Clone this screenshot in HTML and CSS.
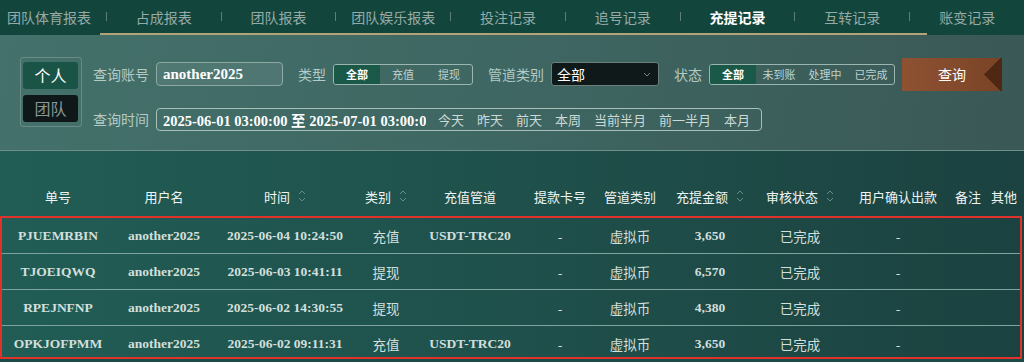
FILE: index.html
```html
<!DOCTYPE html>
<html>
  <head>
    <meta charset="utf-8">
    <title>充提记录</title>
    <link rel="stylesheet" href="styles.css">
  </head>
  <body>
    <div class="tabs">
      <div class="tab-list">
        <span class="tab">团队体育报表</span><span class="sep"></span>
        <span class="tab">占成报表</span><span class="sep"></span>
        <span class="tab">团队报表</span><span class="sep"></span>
        <span class="tab">团队娱乐报表</span><span class="sep"></span>
        <span class="tab">投注记录</span><span class="sep"></span>
        <span class="tab">追号记录</span><span class="sep"></span>
        <span class="tab active">充提记录</span><span class="sep"></span>
        <span class="tab">互转记录</span><span class="sep"></span>
        <span class="tab">账变记录</span>
      </div>
      <div class="tab-line"></div>
    </div>

    <div class="filters">
      <div class="toggle">
        <div class="toggle-btn on">个人</div>
        <div class="toggle-btn">团队</div>
      </div>
      <div class="fields">
        <div class="field-row">
          <span class="label">查询账号</span>
          <input class="input account" type="text" value="another2025" readonly>
          <span class="label gap-l">类型</span>
          <div class="seg">
            <span class="on">全部</span><span>充值</span><span>提现</span>
          </div>
          <span class="label gap-l">管道类别</span>
          <div class="select">
            <span>全部</span>
            <svg width="8" height="5" viewBox="0 0 8 5"><path d="M1 1 L4 4 L7 1" fill="none" stroke="#6f8582" stroke-width="1"/></svg>
          </div>
          <span class="label gap-l">状态</span>
          <div class="seg">
            <span class="on">全部</span><span>未到账</span><span>处理中</span><span>已完成</span>
          </div>
          <div class="btn-search">查询</div>
        </div>
        <div class="field-row row-time">
          <span class="label">查询时间</span>
          <div class="range">
            <input class="range-text" type="text" value="2025-06-01 03:00:00 至 2025-07-01 03:00:00" readonly>
            <span class="quick first">今天</span>
            <span class="quick">昨天</span>
            <span class="quick">前天</span>
            <span class="quick">本周</span>
            <span class="quick">当前半月</span>
            <span class="quick">前一半月</span>
            <span class="quick">本月</span>
          </div>
        </div>
      </div>
    </div>

    <div class="table">
      <div class="thead">
        <div class="th">单号</div>
        <div class="th">用户名</div>
        <div class="th">时间<svg class="sort" width="8" height="16" viewBox="0 0 8 16"><path d="M1 6 L4 3 L7 6 M1 10 L4 13 L7 10" fill="none" stroke="#6b8c86" stroke-width="1"/></svg></div>
        <div class="th">类别<svg class="sort" width="8" height="16" viewBox="0 0 8 16"><path d="M1 6 L4 3 L7 6 M1 10 L4 13 L7 10" fill="none" stroke="#6b8c86" stroke-width="1"/></svg></div>
        <div class="th">充值管道</div>
        <div class="th">提款卡号</div>
        <div class="th">管道类别</div>
        <div class="th">充提金额<svg class="sort" width="8" height="16" viewBox="0 0 8 16"><path d="M1 6 L4 3 L7 6 M1 10 L4 13 L7 10" fill="none" stroke="#6b8c86" stroke-width="1"/></svg></div>
        <div class="th">审核状态<svg class="sort" width="8" height="16" viewBox="0 0 8 16"><path d="M1 6 L4 3 L7 6 M1 10 L4 13 L7 10" fill="none" stroke="#6b8c86" stroke-width="1"/></svg></div>
        <div class="th">用户确认出款</div>
        <div class="th">备注</div>
        <div class="th">其他</div>
      </div>

      <div class="tbody">
        <div class="tr">
          <div class="td en">PJUEMRBIN</div>
          <div class="td en">another2025</div>
          <div class="td en">2025-06-04 10:24:50</div>
          <div class="td">充值</div>
          <div class="td en">USDT-TRC20</div>
          <div class="td">-</div>
          <div class="td">虚拟币</div>
          <div class="td en">3,650</div>
          <div class="td">已完成</div>
          <div class="td">-</div>
          <div class="td"></div>
          <div class="td"></div>
        </div>
        <div class="tr">
          <div class="td en">TJOEIQWQ</div>
          <div class="td en">another2025</div>
          <div class="td en">2025-06-03 10:41:11</div>
          <div class="td">提现</div>
          <div class="td en"></div>
          <div class="td">-</div>
          <div class="td">虚拟币</div>
          <div class="td en">6,570</div>
          <div class="td">已完成</div>
          <div class="td">-</div>
          <div class="td"></div>
          <div class="td"></div>
        </div>
        <div class="tr">
          <div class="td en">RPEJNFNP</div>
          <div class="td en">another2025</div>
          <div class="td en">2025-06-02 14:30:55</div>
          <div class="td">提现</div>
          <div class="td en"></div>
          <div class="td">-</div>
          <div class="td">虚拟币</div>
          <div class="td en">4,380</div>
          <div class="td">已完成</div>
          <div class="td">-</div>
          <div class="td"></div>
          <div class="td"></div>
        </div>
        <div class="tr">
          <div class="td en">OPKJOFPMM</div>
          <div class="td en">another2025</div>
          <div class="td en">2025-06-02 09:11:31</div>
          <div class="td">充值</div>
          <div class="td en">USDT-TRC20</div>
          <div class="td">-</div>
          <div class="td">虚拟币</div>
          <div class="td en">3,650</div>
          <div class="td">已完成</div>
          <div class="td">-</div>
          <div class="td"></div>
          <div class="td"></div>
        </div>
      </div>
    </div>
  </body>
</html>
```

FILE: styles.css
```css
* {
  margin: 0;
  box-sizing: border-box;
}

body {
  width: 1024px;
  height: 362px;
  overflow: hidden;
  background: #1d4a46;
  font-family: "Noto Sans CJK SC", sans-serif;
  color: #d5e0dd;
}

/* 顶部标签 */
.tabs {
  background: #12463d;
}

.tab-list {
  display: flex;
  align-items: center;
  height: 33px;
  margin-left: -8px;
}

.tab {
  width: 114px;
  text-align: center;
  font-size: 14px;
  color: #98aaa6;
}

.tab.active {
  color: #ffffff;
  font-weight: bold;
}

.sep {
  width: 1px;
  height: 9px;
  background: #5f7f79;
}

.tab-line {
  width: 827px;
  height: 2px;
  margin-left: 100px;
  background: #b3a478;
}

/* 筛选区 */
.filters {
  display: flex;
  height: 116px;
  padding: 22px 0 0 20px;
  background: linear-gradient(100deg, #44716b 0%, #3e6561 55%, #3a5855 100%);
  border-bottom: 1px solid #6e8f8a;
}

.toggle {
  display: flex;
  flex-direction: column;
  gap: 6px;
  width: 62px;
  height: 70px;
  padding: 4px 3px 4px 2px;
  border: 1px solid #6c8b86;
  border-radius: 3px;
}

.toggle-btn {
  height: 27px;
  line-height: 27px;
  text-align: center;
  font-size: 16px;
  border-radius: 3px;
  background: #0f1718;
  color: #8a9896;
}

.toggle-btn.on {
  background: #1a5447;
  color: #ffffff;
}

.fields {
  display: flex;
  flex-direction: column;
  gap: 16px;
  margin-left: 11px;
}

.field-row {
  display: flex;
  align-items: center;
  height: 34px;
}

.row-time {
  height: 24px;
}

.label {
  font-size: 14px;
  color: #b3cac5;
  margin-right: 7px;
}

.gap-l {
  margin-left: 15px;
}

.input {
  height: 24px;
  padding: 0 0 0 6px;
  border: 1px solid #8ea8a3;
  border-radius: 4px;
  background: rgba(255, 255, 255, 0.08);
  color: #ffffff;
  font-family: "Liberation Serif", "Noto Sans CJK SC", serif;
  font-weight: bold;
  font-size: 15px;
  outline: none;
}

.account {
  width: 127px;
}

.seg {
  display: flex;
  height: 21px;
  border: 1px solid #9bb5b0;
  border-radius: 3px;
  overflow: hidden;
}

.seg span {
  width: 46px;
  line-height: 19px;
  text-align: center;
  font-size: 11px;
  color: #bfd2cd;
}

.seg span.on {
  background: #1a5848;
  color: #ffffff;
  font-weight: bold;
}

.select {
  display: flex;
  align-items: center;
  justify-content: space-between;
  width: 108px;
  height: 24px;
  padding: 0 7px 0 5px;
  background: #0f1919;
  border: 1px solid #6b807d;
  border-radius: 3px;
  font-size: 14px;
  color: #ffffff;
}

.btn-search {
  width: 100px;
  height: 33px;
  line-height: 33px;
  margin-left: 7px;
  text-align: center;
  font-size: 14px;
  color: #ffffff;
  background:
    conic-gradient(from 45deg at 82% 50%, #4f2814 0deg 90deg, transparent 90deg),
    linear-gradient(90deg, #8e5232, #7a4326);
}

.range {
  display: flex;
  align-items: center;
  width: 606px;
  height: 23px;
  border: 1px solid #a8bfba;
  border-radius: 4px;
}

.range-text {
  width: 269px;
  height: 21px;
  padding: 0 0 0 6px;
  border: none;
  background: transparent;
  outline: none;
  color: #ffffff;
  font-family: "Liberation Serif", "Noto Sans CJK SC", serif;
  font-weight: bold;
  font-size: 14.5px;
}

.quick {
  margin-left: 13px;
  font-size: 13px;
  color: #ccdad6;
}

.quick.first {
  margin-left: 12px;
}

/* 表格 */
.table {
  background: linear-gradient(90deg, #215d55 0%, #1f4f4a 55%, #1b4240 100%);
}

.thead,
.tr {
  display: grid;
  grid-template-columns: 116px 96px 146px 56px 112px 68px 72px 88px 92px 104px 36px 36px;
}

.thead {
  height: 65px;
  align-items: end;
  padding-bottom: 10px;
}

.th {
  display: flex;
  align-items: center;
  justify-content: center;
  gap: 8px;
  height: 20px;
  font-size: 13px;
  color: #eef4f2;
  white-space: nowrap;
}

.tbody {
  width: 1022px;
  height: 143px;
  padding-top: 2px;
  overflow: hidden;
  outline: 2px solid #e0322b;
  outline-offset: -2px;
}

.tr {
  height: 36px;
  align-items: center;
  border-bottom: 1px solid #7fa39e;
}

.td {
  text-align: center;
  font-size: 13.5px;
  color: #d3dfdb;
  white-space: nowrap;
}

.td.en {
  font-family: "Liberation Serif", "Noto Sans CJK SC", serif;
  font-weight: bold;
}
```
